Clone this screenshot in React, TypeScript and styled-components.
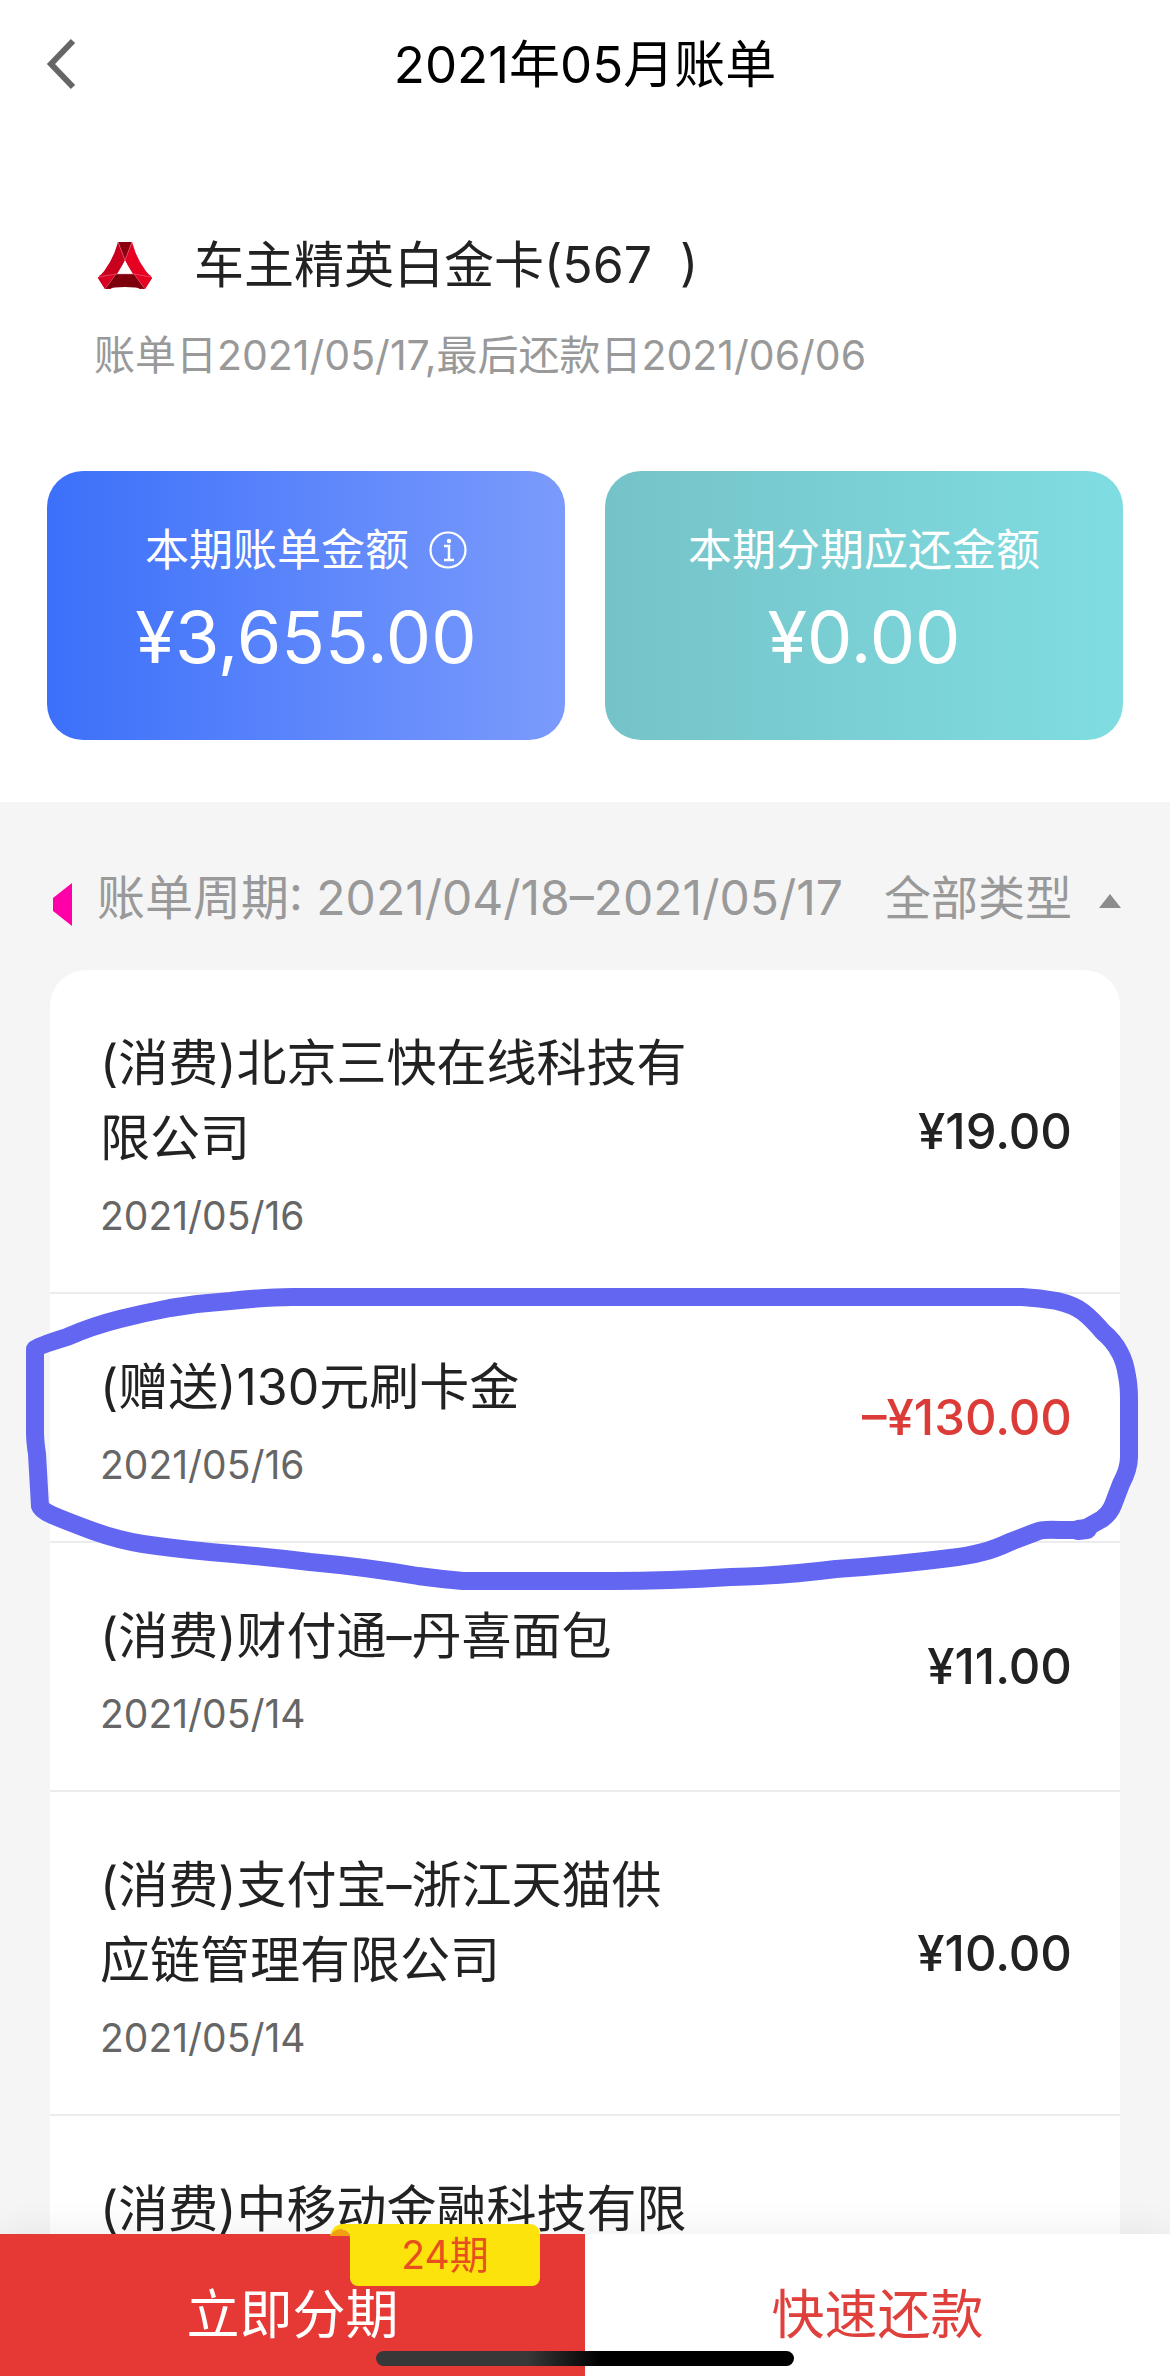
import React from "react";
import styled, { createGlobalStyle } from "styled-components";

const GlobalStyle = createGlobalStyle`
  * { box-sizing: border-box; }
  body {
    margin: 0;
    background: #ffffff;
    color: #222222;
    font-family: Inter, "Noto Sans CJK SC", sans-serif;
  }
  button, select { font-family: inherit; }
`;

const Screen = styled.div`
  display: flex;
  flex-direction: column;
  height: 100vh;
  overflow: hidden;
`;

const TopBar = styled.header`
  display: grid;
  grid-template-columns: 1fr auto 1fr;
  align-items: center;
  flex: none;
  height: 128px;
  padding: 0 44px;
  background: #ffffff;
`;

const BackButton = styled.button`
  display: flex;
  justify-self: start;
  padding: 0;
  border: 0;
  background: none;
  color: #666666;
`;

const PageTitle = styled.h1`
  margin: 0;
  color: #000000;
  font-size: 51px;
  font-weight: 400;
  line-height: 75px;
`;

const Content = styled.main`
  flex: 1;
  min-height: 0;
  overflow: hidden auto;
  scrollbar-width: none;
  background: #f5f5f5;
`;

const Summary = styled.section`
  padding: 100px 47px 62px;
  background: #ffffff;
`;

const CardName = styled.div`
  display: flex;
  align-items: center;
  gap: 42px;
  padding-left: 51px;
`;

const CardTitle = styled.h2`
  margin: 0;
  font-size: 50px;
  font-weight: 400;
  line-height: 75px;
`;

const CardDates = styled.p`
  margin: 22px 0 86px;
  padding-left: 47px;
  color: #999999;
  font-size: 41px;
  line-height: 60px;
`;

const Tiles = styled.div`
  display: grid;
  grid-template-columns: 1fr 1fr;
  gap: 40px;
`;

const Tile = styled.div<{ $from: string; $to: string }>`
  display: flex;
  flex-direction: column;
  align-items: center;
  gap: 13px;
  padding: 49px 20px 59px;
  border-radius: 36px;
  background: linear-gradient(90deg, ${(p) => p.$from}, ${(p) => p.$to});
  color: #ffffff;
`;

const TileLabel = styled.div`
  display: flex;
  align-items: center;
  gap: 20px;
  font-size: 44px;
  line-height: 60px;
`;

const InfoButton = styled.button`
  display: flex;
  padding: 0;
  border: 0;
  background: none;
  color: inherit;
`;

const TileAmount = styled.div`
  font-size: 72px;
  line-height: 88px;
`;

const FilterBar = styled.div`
  display: flex;
  align-items: center;
  padding: 60px 49px 36px 53px;
  color: #999999;
  font-size: 47px;
  line-height: 72px;
`;

const Period = styled.span`
  flex: 1;
  margin-left: 25px;
  font-size: 48px;
  white-space: nowrap;
`;

const TypeFilter = styled.label`
  display: flex;
  align-items: center;
  gap: 27px;
`;

const TypeSelect = styled.select`
  appearance: none;
  padding: 0;
  border: 0;
  background: none;
  color: inherit;
  font-size: inherit;
  line-height: inherit;
`;

const Records = styled.ul`
  margin: 0 50px;
  padding: 0;
  border-radius: 36px 36px 0 0;
  background: #ffffff;
  list-style: none;
`;

const Record = styled.li`
  position: relative;
  display: flex;
  align-items: center;
  justify-content: space-between;
  padding: 56px 48px 46px 50px;
  border-bottom: 2px solid #ececee;
`;

const RecordInfo = styled.div`
  width: 62%;
`;

const RecordTitle = styled.div`
  font-size: 50px;
  line-height: 75px;
`;

const RecordDate = styled.time`
  display: block;
  margin-top: 10px;
  color: #666666;
  font-size: 39px;
  line-height: 60px;
`;

const RecordAmount = styled.div<{ $credit?: boolean }>`
  padding-bottom: 10px;
  color: ${(p) => (p.$credit ? "#dc3c38" : "#222222")};
  font-size: 49px;
  font-weight: 500;
  line-height: 75px;
`;

const HandMark = styled.svg`
  position: absolute;
  z-index: 1;
  top: -15px;
  left: -30px;
  width: calc(100% + 60px);
  height: 320px;
  pointer-events: none;
`;

const Actions = styled.footer`
  position: relative;
  z-index: 2;
  display: grid;
  grid-template-columns: 1fr 1fr;
  flex: none;
  height: 142px;
  box-shadow: 0 0 36px rgba(0, 0, 0, 0.08);
`;

const ActionButton = styled.button<{ $primary?: boolean }>`
  position: relative;
  padding: 20px 0 0;
  border: 0;
  background: ${(p) => (p.$primary ? "#e63935" : "#ffffff")};
  color: ${(p) => (p.$primary ? "#ffffff" : "#e0403c")};
  font-size: 53px;
  line-height: 75px;
`;

const Badge = styled.span`
  position: absolute;
  top: -10px;
  right: 45px;
  width: 190px;
  border-radius: 0 10px 8px 8px;
  background: #fde30c;
  color: #e6501e;
  font-size: 39px;
  line-height: 62px;
`;

const BadgeFold = styled.svg`
  position: absolute;
  top: 0;
  left: -20px;
`;

const HomeIndicator = styled.div`
  position: absolute;
  bottom: 10px;
  left: 50%;
  width: 418px;
  height: 15px;
  border-radius: 8px;
  background: linear-gradient(90deg, #383838 36%, #000000 54%);
  transform: translateX(-50%);
`;

type Item = {
  title: string;
  date: string;
  amount: string;
  credit?: boolean;
  marked?: boolean;
};

const items: Item[] = [
  { title: "(消费)北京三快在线科技有限公司", date: "2021/05/16", amount: "¥19.00" },
  { title: "(赠送)130元刷卡金", date: "2021/05/16", amount: "–¥130.00", credit: true, marked: true },
  { title: "(消费)财付通–丹喜面包", date: "2021/05/14", amount: "¥11.00" },
  { title: "(消费)支付宝–浙江天猫供应链管理有限公司", date: "2021/05/14", amount: "¥10.00" },
  { title: "(消费)中移动金融科技有限公司", date: "2021/05/14", amount: "¥10.00" },
];

function BankLogo() {
  return (
    <svg width="54" height="48" viewBox="0 0 54 48" aria-hidden="true">
      <path d="M20 0H34L27 19Z" fill="#8a0010" />
      <path d="M20 0L27 18L13 47H7L0 36Q14 22 20 0Z" fill="#c8001e" />
      <path d="M34 0L27 18L41 47H47L54 36Q40 22 34 0Z" fill="#e60022" />
      <path d="M27 19L19 32H35Z" fill="#ffffff" />
      <path d="M18 32H36L47 47Q27 43 7 47Z" fill="#7d000c" />
      <path d="M0 36L2 33L18 32L7 47Z" fill="#d80020" />
      <path d="M54 36L52 33L36 32L47 47Z" fill="#e60022" />
      <path d="M20 0L27 18L34 0M1 35L18 32H36L53 35M18 32L7 47M36 32L47 47" fill="none" stroke="#f08090" strokeWidth="0.5" />
    </svg>
  );
}

function HandDrawnLoop() {
  return (
    <HandMark viewBox="20 1280 1130 320" preserveAspectRatio="none" aria-hidden="true">
      <path
        d="M35 1350Q38 1347 67 1338Q92 1327 120 1320Q144 1314 170 1309Q200 1304 230 1302Q268 1298 292 1298H1022Q1040 1299 1057 1302Q1074 1306 1083 1313Q1092 1320 1103 1333Q1114 1342 1120 1354Q1125 1363 1127 1377Q1129 1387 1129 1400V1458Q1129 1470 1121 1485L1113 1506Q1110 1514 1102 1520L1086 1529L1080 1531H1060Q1042 1530 1036 1533L1010 1543Q995 1550 983 1553Q968 1557 950 1559Q895 1566 836 1570Q780 1577 731 1578Q670 1582 610 1582H463Q440 1580 418 1577Q365 1568 310 1563Q260 1557 210 1553Q170 1549 143 1545Q118 1541 93 1532Q66 1522 52 1516Q41 1511 40 1507L37 1455Q35 1442 35 1433Z"
        fill="none"
        stroke="#6366f1"
        strokeWidth="18"
        strokeLinecap="round"
        strokeLinejoin="round"
      />
      <path d="M1078 1531L1087 1530" fill="none" stroke="#6366f1" strokeWidth="20" strokeLinecap="round" />
    </HandMark>
  );
}

export default function App() {
  return (
    <Screen>
      <GlobalStyle />
      <TopBar>
        <BackButton type="button" aria-label="返回">
          <svg width="34" height="54" viewBox="0 0 34 54" fill="none">
            <path d="M29 4L7 27L29 50" stroke="currentColor" strokeWidth="6" />
          </svg>
        </BackButton>
        <PageTitle>2021年05月账单</PageTitle>
      </TopBar>

      <Content>
        <Summary>
          <CardName>
            <BankLogo />
            <CardTitle>车主精英白金卡(567{"\u00a0\u00a0"})</CardTitle>
          </CardName>
          <CardDates>账单日2021/05/17,最后还款日2021/06/06</CardDates>
          <Tiles>
            <Tile $from="#3c70fa" $to="#7b9bfc">
              <TileLabel>
                本期账单金额
                <InfoButton type="button" aria-label="说明">
                  <svg width="38" height="38" viewBox="0 0 38 38" fill="none" stroke="currentColor" strokeWidth="2.200">
                    <circle cx="19" cy="19" r="17.500" />
                    <path d="M15 15H20V29M15 29H25" strokeWidth="2.500" />
                    <circle cx="20" cy="10" r="2.200" fill="currentColor" stroke="none" />
                  </svg>
                </InfoButton>
              </TileLabel>
              <TileAmount>¥3,655.00</TileAmount>
            </Tile>
            <Tile $from="#75c3c8" $to="#7fdde1">
              <TileLabel>本期分期应还金额</TileLabel>
              <TileAmount>¥0.00</TileAmount>
            </Tile>
          </Tiles>
        </Summary>

        <FilterBar>
          <svg width="19" height="56" viewBox="0 0 19 56" aria-hidden="true">
            <path d="M19 13V56L0 41V28Z" fill="#ff00a8" />
          </svg>
          <Period>账单周期: 2021/04/18–2021/05/17</Period>
          <TypeFilter>
            <TypeSelect aria-label="账单类型">
              <option>全部类型</option>
            </TypeSelect>
            <svg width="22" height="20" viewBox="0 0 22 20" aria-hidden="true">
              <path d="M11 6L22 20H0Z" fill="#8c8c8c" />
            </svg>
          </TypeFilter>
        </FilterBar>

        <Records>
          {items.map((item) => (
            <Record key={item.title}>
              <RecordInfo>
                <RecordTitle>{item.title}</RecordTitle>
                <RecordDate>{item.date}</RecordDate>
              </RecordInfo>
              <RecordAmount $credit={item.credit}>{item.amount}</RecordAmount>
              {item.marked && <HandDrawnLoop />}
            </Record>
          ))}
        </Records>
      </Content>

      <Actions>
        <ActionButton type="button" $primary>
          立即分期
          <Badge>
            <BadgeFold width="22" height="14" viewBox="0 0 22 14" aria-hidden="true">
              <path d="M0 12Q3 0 13 0H22V14H20Q20 6 12 5Z" fill="#fde30c" />
              <path d="M0 12Q4 5 11 5Q19 6 20 12Z" fill="#f0a010" />
            </BadgeFold>
            24期
          </Badge>
        </ActionButton>
        <ActionButton type="button">快速还款</ActionButton>
        <HomeIndicator />
      </Actions>
    </Screen>
  );
}
